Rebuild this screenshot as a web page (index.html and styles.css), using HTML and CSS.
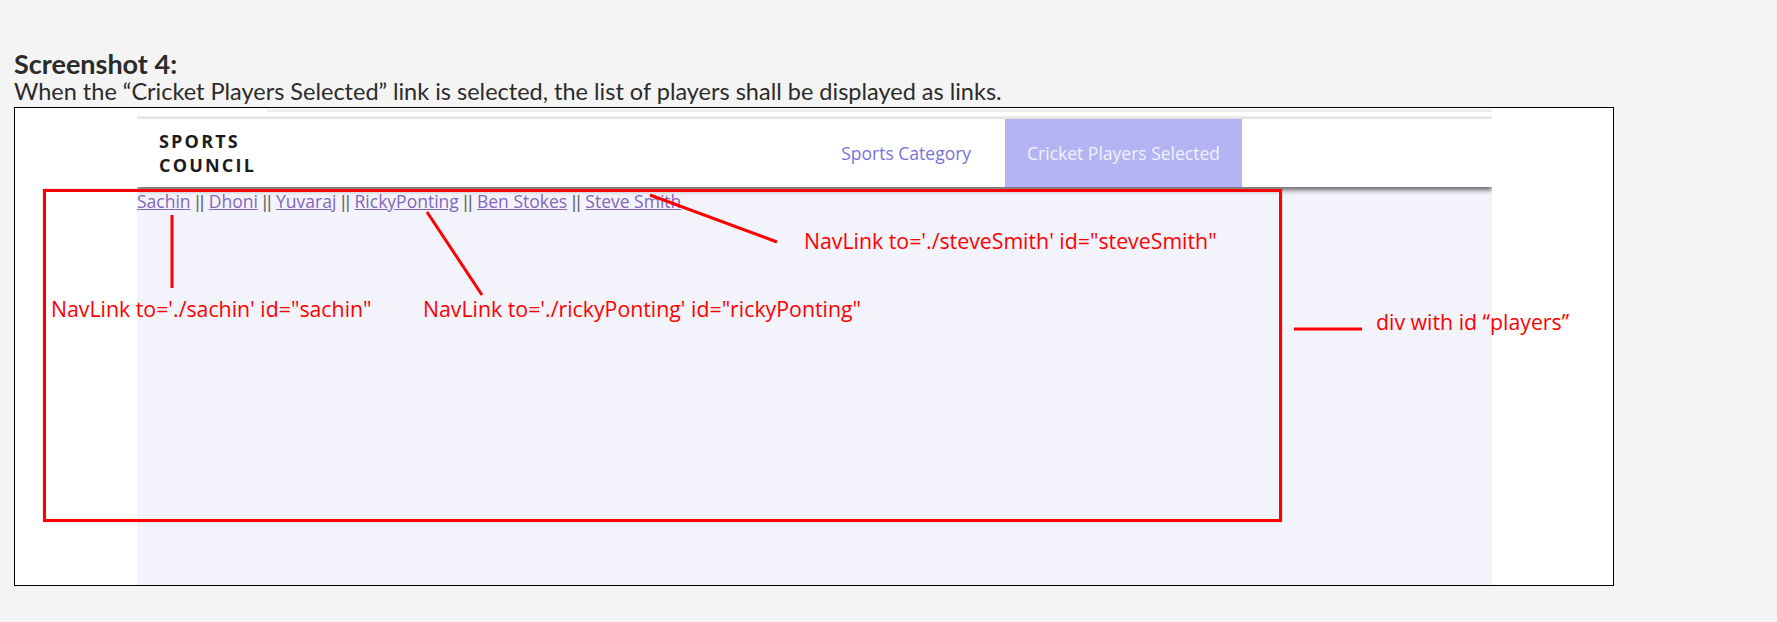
FILE: index.html
```html
<!DOCTYPE html>
<html lang="en">
<head>
<meta charset="utf-8">
<title>Screenshot 4</title>
<link rel="stylesheet" href="styles.css">
</head>
<body>
  <h2 class="title">Screenshot 4:</h2>
  <p class="desc">When the “Cricket Players Selected” link is selected, the list of players shall be displayed as links.</p>
  <div class="frame">
    <div class="shot">
      <div class="topbar"><div class="band band1"></div><div class="band band2"></div></div>
      <header class="nav">
        <div class="logo"><span>SPORTS</span><span>COUNCIL</span></div>
        <nav class="menu">
          <a class="menu-link" href="#">Sports Category</a>
          <a class="menu-link active" href="#">Cricket Players Selected</a>
        </nav>
      </header>
      <div class="players" id="players"><a class="player" href="#" id="sachin">Sachin</a> <span class="sep">||</span> <a class="player" href="#">Dhoni</a> <span class="sep">||</span> <a class="player" href="#">Yuvaraj</a> <span class="sep">||</span> <a class="player" href="#" id="rickyPonting">RickyPonting</a> <span class="sep">||</span> <a class="player" href="#">Ben Stokes</a> <span class="sep">||</span> <a class="player" href="#" id="steveSmith">Steve Smith</a></div>
    </div>
    <div class="annot-box"></div>
    <svg class="annot-lines" viewBox="0 0 1598 477" width="1598" height="477">
      <line x1="157" y1="107" x2="157" y2="180" />
      <line x1="412" y1="104" x2="467" y2="187" />
      <line x1="635" y1="87" x2="762" y2="134" />
      <line x1="1279" y1="221" x2="1347" y2="221" />
    </svg>
    <span class="label label-sachin">NavLink to='./sachin' id="sachin"</span>
    <span class="label label-ricky">NavLink to='./rickyPonting' id="rickyPonting"</span>
    <span class="label label-steve">NavLink to='./steveSmith' id="steveSmith"</span>
    <span class="label label-div">div with id “players”</span>
  </div>
</body>
</html>
```

FILE: styles.css
```css
html, body {
  margin: 0;
}

body {
  background: #f4f4f4;
  padding: 0 14px;
  font-family: "Lato", "Open Sans", sans-serif;
  color: #2b2b2b;
}

.title {
  margin: 0;
  padding-top: 50px;
  font-size: 27px;
  line-height: 27px;
  font-weight: 700;
}

.desc {
  margin: 1px 0 0;
  font-size: 23.5px;
  line-height: 26px;
}

.frame {
  position: relative;
  margin-top: 3px;
  width: 1600px;
  height: 479px;
  box-sizing: border-box;
  border: 1px solid #000;
  background: #fff;
}

.shot {
  margin-left: 122px;
  width: 1355px;
  height: 100%;
  display: flex;
  flex-direction: column;
  overflow: hidden;
}

.topbar {
  height: 11px;
  padding-top: 1px;
  box-sizing: border-box;
  flex: none;
}

.band {
  height: 3px;
  background: #eeeeee;
}

.band1 {
  margin-left: 130px;
}

.band2 {
  margin-top: 4px;
}

.nav {
  flex: none;
  height: 68px;
  display: flex;
  justify-content: space-between;
  align-items: stretch;
  background: #fff;
  position: relative;
  z-index: 1;
  box-shadow: 0 3px 5px rgba(0, 0, 0, 0.6);
  padding: 0 250px 0 22px;
}

.logo {
  display: flex;
  flex-direction: column;
  padding-top: 10px;
  font-family: "Open Sans", sans-serif;
  font-weight: 700;
  font-size: 18px;
  line-height: 24px;
  letter-spacing: 2.2px;
  color: #1b1b1b;
}

.menu {
  display: flex;
  gap: 12px;
}

.menu-link {
  display: flex;
  align-items: center;
  padding: 0 22px;
  font-family: "Open Sans", sans-serif;
  font-size: 17.5px;
  color: #7a72dc;
  text-decoration: none;
}

.menu-link.active {
  background: #b4b4f4;
  color: #f1f1ff;
}

.players {
  flex: 1;
  background: #f3f3fb;
  padding-top: 3px;
  font-family: "Open Sans", sans-serif;
  font-size: 17.5px;
  line-height: 22px;
  color: #666;
}

.player {
  color: #8466bb;
}

.sep {
  font-family: "Liberation Sans", sans-serif;
  color: #6a6a6a;
}

.annot-box {
  position: absolute;
  left: 28px;
  top: 81px;
  width: 1239px;
  height: 333px;
  box-sizing: border-box;
  border: 3px solid #f00;
  box-shadow: 0 0 1px rgba(255, 0, 0, 0.5);
  z-index: 2;
}

.annot-lines {
  position: absolute;
  left: 0;
  top: 0;
  z-index: 2;
  stroke: #f00;
  stroke-width: 3;
}

.label {
  position: absolute;
  font-family: "Open Sans", sans-serif;
  font-size: 21.3px;
  line-height: 21px;
  color: #f00;
  white-space: nowrap;
  z-index: 3;
}

.label-sachin {
  left: 36px;
  top: 190px;
}

.label-ricky {
  left: 408px;
  top: 190px;
}

.label-steve {
  left: 789px;
  top: 122px;
}

.label-div {
  left: 1361px;
  top: 203px;
}
```
